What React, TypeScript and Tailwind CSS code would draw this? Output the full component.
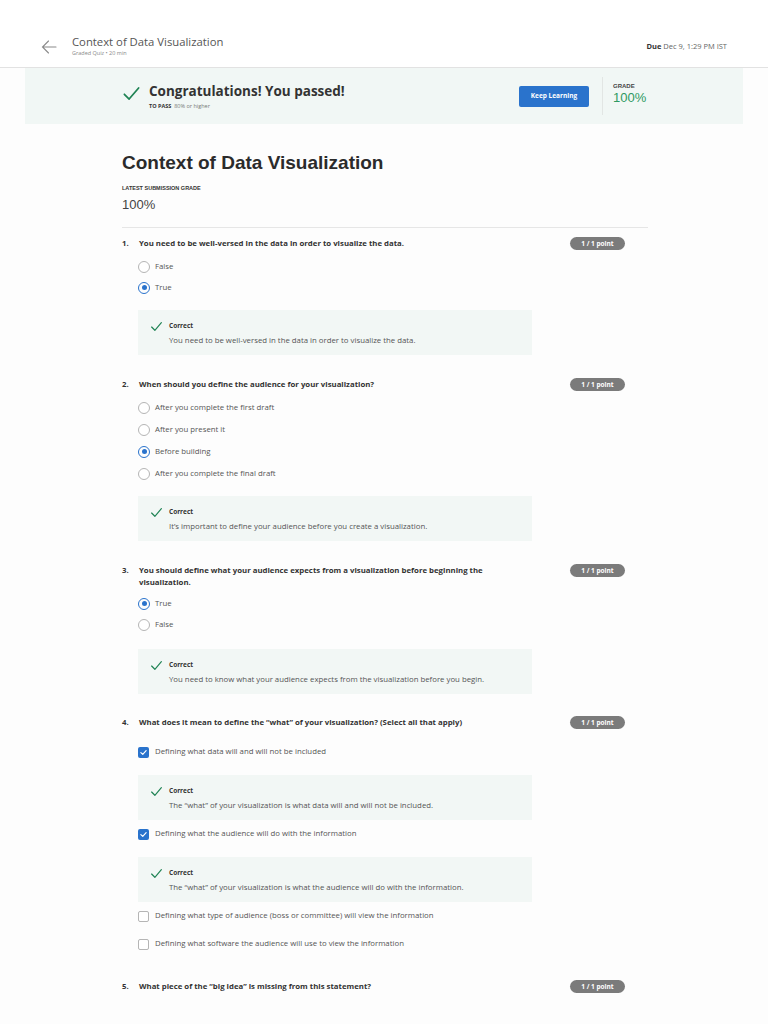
import React from "react";

type Option = { label: string; checked?: boolean };
type Question = {
  num: number;
  text: string;
  options: Option[];
  feedback: string;
};

const GREEN = "#1f8354";
const ARIAL = { fontFamily: '"Liberation Sans", Arial, sans-serif' };

const Check = ({ className = "" }: { className?: string }) => (
  <svg viewBox="0 0 24 24" className={className} fill="none" stroke={GREEN} strokeWidth={2.2} strokeLinecap="round" strokeLinejoin="round">
    <path d="M3 13 L9 19 L21 5" />
  </svg>
);

const Radio = ({ checked }: { checked?: boolean }) =>
  checked ? (
    <span className="w-[12px] h-[12px] rounded-full border-[1.5px] border-[#2a73cc] flex items-center justify-center shrink-0">
      <span className="w-[5px] h-[5px] rounded-full bg-[#2a73cc]" />
    </span>
  ) : (
    <span className="w-[12px] h-[12px] rounded-full border border-[#b5b5b5] bg-white shrink-0" />
  );

const Box = ({ checked }: { checked?: boolean }) =>
  checked ? (
    <span className="w-[11px] h-[11px] rounded-[2px] bg-[#2a73cc] flex items-center justify-center shrink-0">
      <svg viewBox="0 0 12 12" className="w-[9px] h-[9px]" fill="none" stroke="white" strokeWidth={1.6} strokeLinecap="round" strokeLinejoin="round">
        <path d="M2.5 6.2 L5 8.5 L9.5 3.5" />
      </svg>
    </span>
  ) : (
    <span className="w-[11px] h-[11px] rounded-[2px] border border-[#b5b5b5] bg-white shrink-0" />
  );

const Feedback = ({ text, className = "" }: { text: string; className?: string }) => (
  <div className={`w-[394px] h-[45px] bg-[#f2f7f5] ml-[16px] pl-[12px] pt-[11px] ${className}`}>
    <div className="flex items-center h-[10px]">
      <Check className="w-[13px] h-[13px]" />
      <span className="ml-[6px] text-[6.5px] font-bold text-[#333]">Correct</span>
    </div>
    <div className="ml-[19px] mt-[3px] h-[12px] leading-[12px] text-[7.8px] text-[#555]">{text}</div>
  </div>
);

const Points = () => (
  <span className="ml-auto mr-[23px] w-[55px] h-[13px] rounded-full bg-[#7b7b7b] text-white text-[6.5px] font-bold flex items-center justify-center shrink-0">
    1 / 1 point
  </span>
);

const QuestionHead = ({ num, text, className = "" }: { num: number; text: string; className?: string }) => (
  <div className={`flex items-start ${className}`}>
    <span className="w-[17px] text-[7.8px] font-bold leading-[12px] text-[#333]">{num}.</span>
    <span className="w-[375px] text-[7.8px] font-bold leading-[12px] text-[#333]">{text}</span>
    <Points />
  </div>
);

const OptionRow = ({ label, checked, kind, className = "" }: { label: string; checked?: boolean; kind: "radio" | "check"; className?: string }) => (
  <div className={`flex items-center ml-[16px] ${kind === "radio" ? "h-[21px]" : "h-[22px]"} ${className}`}>
    {kind === "radio" ? <Radio checked={checked} /> : <Box checked={checked} />}
    <span className={`text-[7.8px] text-[#555] ${kind === "radio" ? "ml-[5px]" : "ml-[6px]"}`}>{label}</span>
  </div>
);

const q1: Question = {
  num: 1,
  text: "You need to be well-versed in the data in order to visualize the data.",
  options: [{ label: "False" }, { label: "True", checked: true }],
  feedback: "You need to be well-versed in the data in order to visualize the data.",
};

const q2: Question = {
  num: 2,
  text: "When should you define the audience for your visualization?",
  options: [
    { label: "After you complete the first draft" },
    { label: "After you present it" },
    { label: "Before building", checked: true },
    { label: "After you complete the final draft" },
  ],
  feedback: "It\u2019s important to define your audience before you create a visualization.",
};

const q3: Question = {
  num: 3,
  text: "You should define what your audience expects from a visualization before beginning the visualization.",
  options: [{ label: "True", checked: true }, { label: "False" }],
  feedback: "You need to know what your audience expects from the visualization before you begin.",
};

const RadioQuestion = ({ q, top, optTop, boxTop }: { q: Question; top: string; optTop: string; boxTop: string }) => (
  <div className={top}>
    <QuestionHead num={q.num} text={q.text} />
    <div className={`${optTop} ${q.num === 2 ? "flex flex-col gap-[1px]" : ""}`}>
      {q.options.map((o) => (
        <OptionRow key={o.label} label={o.label} checked={o.checked} kind="radio" />
      ))}
    </div>
    <Feedback text={q.feedback} className={boxTop} />
  </div>
);

export default function App() {
  return (
    <div className="min-h-screen bg-[#fdfdfd]" style={{ fontFamily: '"Open Sans", "Liberation Sans", sans-serif' }}>
      {/* top bar */}
      <div className="h-[68px] border-b border-[#e2e2e2] bg-white flex items-start pt-[35px] pl-[41px] pr-[41px]">
        <svg viewBox="0 0 16 14" className="w-[16px] h-[14px] mt-[5px]" fill="none" stroke="#8a8a8a" strokeWidth={1.1} strokeLinecap="round">
          <path d="M15 7 H1.5 M7.5 1 L1.5 7 L7.5 13" />
        </svg>
        <div className="ml-[15px]">
          <div className="text-[11.3px] leading-[14px] text-[#555]">Context of Data Visualization</div>
          <div className="text-[5.5px] leading-[8px] text-[#888]">Graded Quiz &bull; 20 min</div>
        </div>
        <div className="ml-auto mt-[6px] text-[7.5px] text-[#666]">
          <span className="font-bold text-[#333]">Due</span> Dec 9, 1:29 PM IST
        </div>
      </div>

      {/* passed banner */}
      <div className="mx-[25px] h-[56px] bg-[#f1f7f5] flex items-center">
        <Check className="ml-[97px] w-[19px] h-[19px] -mt-[6px]" />
        <div className="ml-[8px]">
          <div className="text-[13.5px] leading-[18px] font-bold text-[#333]">Congratulations! You passed!</div>
          <div className="mt-[2px] text-[5.5px] text-[#777]">
            <span className="font-bold text-[#333]">TO PASS</span>&nbsp; 80% or higher
          </div>
        </div>
        <button className="ml-auto w-[70px] h-[21px] bg-[#2a73cc] rounded-[2px] text-white text-[6.5px] font-bold">
          Keep Learning
        </button>
        <div className="ml-[13px] w-px h-[38px] bg-[#e2e6e4]" />
        <div className="ml-[10px] w-[130px] -mt-[4px]" style={ARIAL}>
          <div className="text-[6px] font-bold text-[#444] leading-[8px]">GRADE</div>
          <div className="text-[13px] leading-[16px] text-[#2e9a62]">100%</div>
        </div>
      </div>

      {/* content */}
      <div className="ml-[122px] w-[526px]">
        <h1 className="mt-[27px] text-[19px] leading-[24px] font-bold text-[#2b2b2b]" style={ARIAL}>
          Context of Data Visualization
        </h1>
        <div className="mt-[9px] text-[5.5px] leading-[8px] font-bold text-[#333]" style={ARIAL}>
          LATEST SUBMISSION GRADE
        </div>
        <div className="mt-[5px] text-[13px] leading-[16px] text-[#444]" style={ARIAL}>
          100%
        </div>
        <div className="mt-[14px] border-b border-[#e6e6e6]" />

        <RadioQuestion q={q1} top="mt-[9px]" optTop="mt-[6px]" boxTop="mt-[12px]" />
        <RadioQuestion q={q2} top="mt-[23px]" optTop="mt-[6px]" boxTop="mt-[12px]" />
        <RadioQuestion q={q3} top="mt-[23px]" optTop="mt-[5px]" boxTop="mt-[14px]" />

        {/* question 4 */}
        <div className="mt-[22px]">
          <QuestionHead num={4} text={'What does it mean to define the \u201cwhat\u201d of your visualization? (Select all that apply)'} />
          <OptionRow kind="check" checked label="Defining what data will and will not be included" className="mt-[12px]" />
          <Feedback text={'The \u201cwhat\u201d of your visualization is what data will and will not be included.'} className="mt-[12px]" />
          <OptionRow kind="check" checked label="Defining what the audience will do with the information" className="mt-[3px]" />
          <Feedback text={'The \u201cwhat\u201d of your visualization is what the audience will do with the information.'} className="mt-[12px]" />
          <OptionRow kind="check" label="Defining what type of audience (boss or committee) will view the information" className="mt-[3px]" />
          <OptionRow kind="check" label="Defining what software the audience will use to view the information" className="mt-[6px]" />
        </div>

        <QuestionHead num={5} text={'What piece of the \u201cbig idea\u201d is missing from this statement?'} className="mt-[25px]" />
        <div className="h-[40px]" />
      </div>
    </div>
  );
}
